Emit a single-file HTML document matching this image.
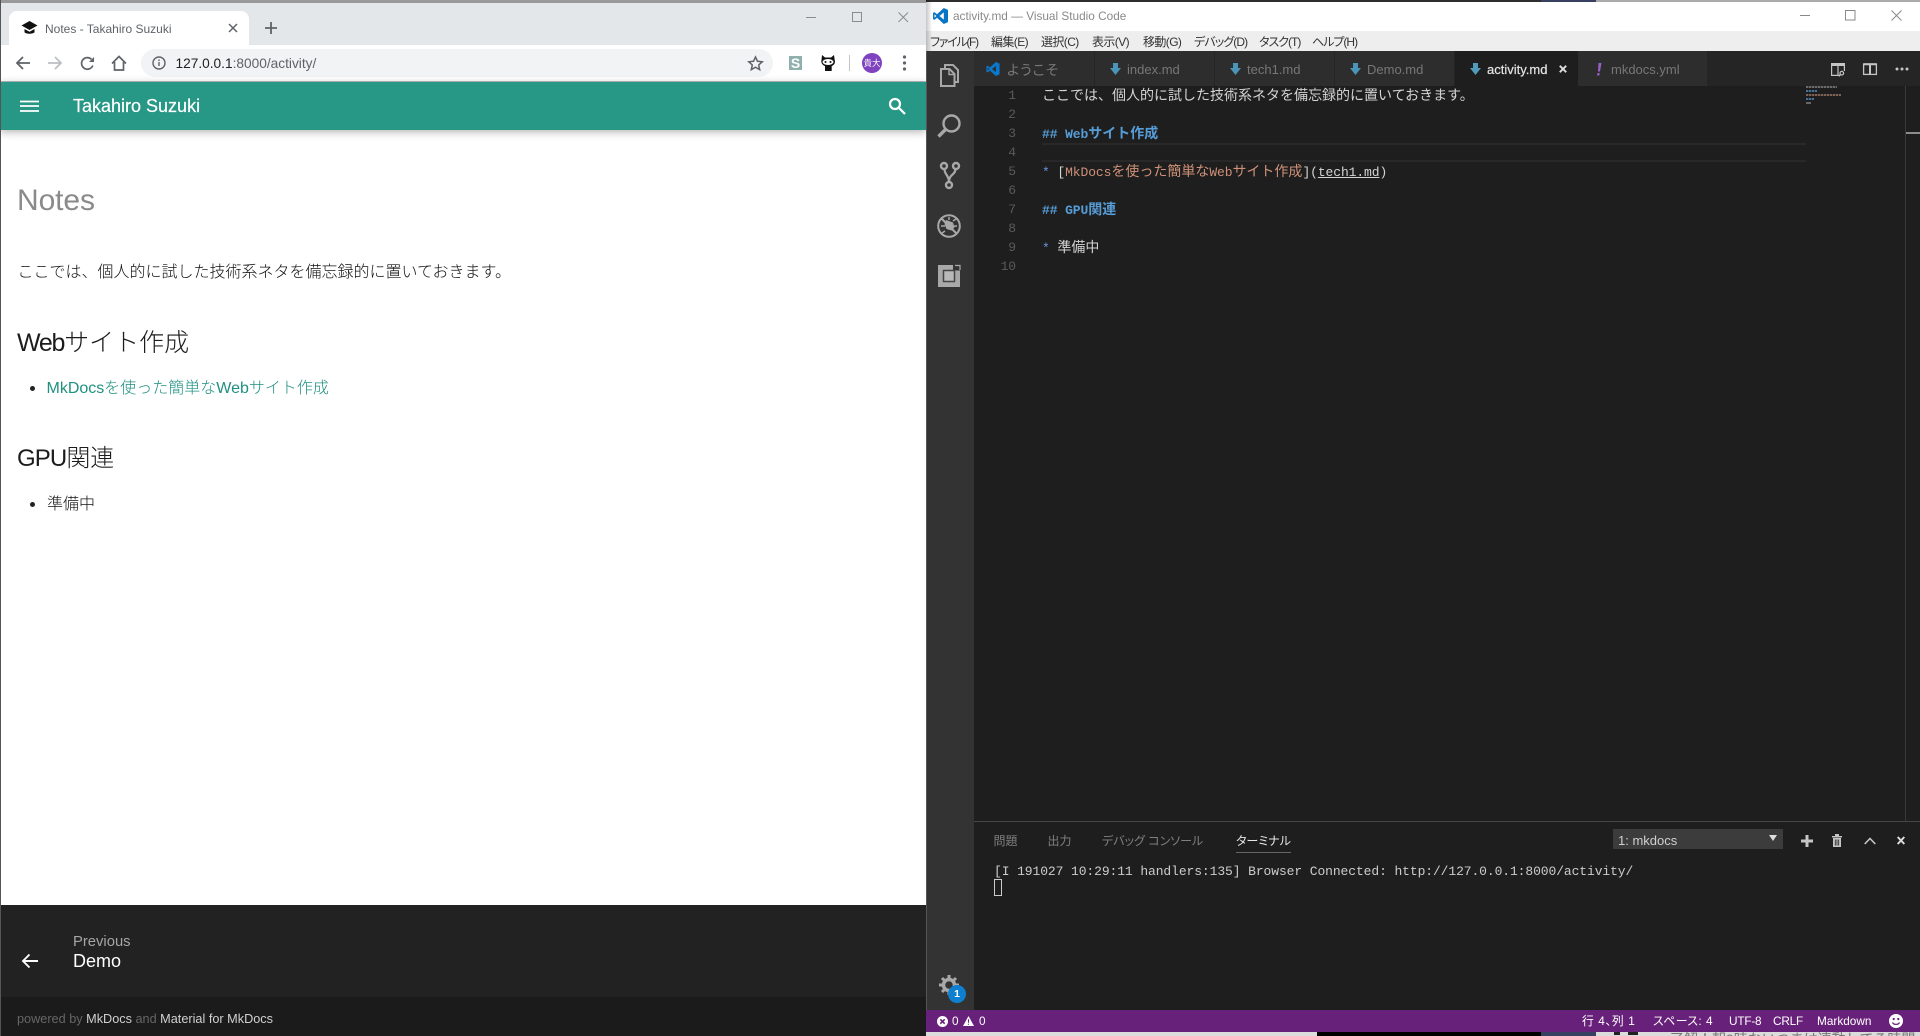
<!DOCTYPE html>
<html lang="ja"><head><meta charset="utf-8"><title>Notes - Takahiro Suzuki</title>
<style>
html,body{margin:0;padding:0;background:#fff}
#r{position:relative;width:1920px;height:1036px;overflow:hidden;background:#fff;font-family:"Liberation Sans","Noto Sans CJK JP",sans-serif}
.b{position:absolute}
.t{position:absolute;white-space:nowrap;line-height:20px;height:20px}
.m{position:absolute;white-space:nowrap;font-family:"Liberation Mono","Noto Sans CJK JP",monospace;font-size:13px;letter-spacing:-.1px;line-height:19px;height:19px;color:#d4d4d4;left:1042px}
.j{font-family:"Noto Sans CJK JP",sans-serif;font-size:14px;letter-spacing:0}
.n{position:absolute;left:990px;width:26px;text-align:right;font-family:"Liberation Mono",monospace;font-size:13px;letter-spacing:-.1px;line-height:19px;color:#5a5a5a}
.h{color:#569cd6;font-weight:bold}
.menu{font-size:12px;color:#333;font-feature-settings:"palt";top:32px}
.tab{font-size:13px;color:#777;top:60px}
.pt{font-size:12px;color:#808080;top:831px;font-feature-settings:"palt"}
.st{font-size:11.800px;color:#fff;top:1011px;font-feature-settings:"palt"}
svg{position:absolute;overflow:visible}
a{text-decoration:none;color:inherit}
</style></head><body><div id="r">

<!-- Browser -->
<div class="b" style="left:0;top:0;width:926px;height:3px;background:#999"></div>
<div class="b" style="left:0;top:3px;width:926px;height:42px;background:#e4e7ea"></div>
<div class="b" style="left:9px;top:11px;width:240px;height:34px;background:#fff;border-radius:8px 8px 0 0"></div>
<div class="b" style="left:0;top:45px;width:926px;height:36px;background:#fff"></div>
<div class="b" style="left:141px;top:49px;width:632px;height:28px;background:#f1f3f4;border-radius:14px"></div>
<div class="b" style="left:0;top:81px;width:926px;height:1px;background:#b8bcbf"></div>
<div class="b" style="left:0;top:82px;width:926px;height:48px;background:#279786;box-shadow:0 2px 8px rgba(0,0,0,.3)"></div>
<div class="b" style="left:0;top:0;width:1px;height:905px;background:#555"></div>

<svg style="left:21px;top:20px" width="17" height="16" viewBox="0 0 17 16"><path d="M8.500 1L0.500 5.500l8 4.500 8-4.500z" fill="#111"/><path d="M3.500 9v3.200c1.500 2 8.500 2 10 0V9l-5 2.800z" fill="#111"/></svg>
<div class="t" style="left:45px;top:19px;font-size:12px;color:#5f6368">Notes - Takahiro Suzuki</div>
<svg style="left:228px;top:23px" width="10" height="10" viewBox="0 0 10 10"><path d="M1 1l8 8M9 1l-8 8" stroke="#5f6368" stroke-width="1.500"/></svg>
<svg style="left:265px;top:22px" width="12" height="12" viewBox="0 0 12 12"><path d="M6 0v12M0 6h12" stroke="#5f6368" stroke-width="1.800"/></svg>
<svg style="left:806px;top:12px" width="102" height="11" viewBox="0 0 102 11" fill="none" stroke="#8a8d90"><path d="M0 5.500h10"/><rect x="46.500" y=".5" width="9" height="9"/><path d="M92.500.5l9.500 9.500M102 .5l-9.500 9.500"/></svg>

<svg style="left:15px;top:55px" width="16" height="16" viewBox="0 0 16 16" fill="none" stroke="#5f6368" stroke-width="1.800"><path d="M15 8H2M8 2L2 8l6 6"/></svg>
<svg style="left:47px;top:55px" width="16" height="16" viewBox="0 0 16 16" fill="none" stroke="#bcbfc2" stroke-width="1.800"><path d="M1 8h13M8 2l6 6-6 6"/></svg>
<svg style="left:80px;top:56px" width="15" height="15" viewBox="0 0 15 15" fill="none" stroke="#5f6368" stroke-width="1.700"><path d="M12.800 9.500A5.800 5.800 0 1 1 11.500 3.300"/><path d="M14 1v5H9" fill="#5f6368" stroke="none"/></svg>
<svg style="left:111px;top:55px" width="16" height="16" viewBox="0 0 16 16" fill="none" stroke="#5f6368" stroke-width="1.700"><path d="M1 8.500L8 1.500l7 7M3.500 7v8h9V7"/></svg>
<svg style="left:152px;top:56px" width="14" height="14" viewBox="0 0 14 14" fill="none" stroke="#5f6368" stroke-width="1.400"><circle cx="7" cy="7" r="6"/><path d="M7 6v4M7 3.500v1.500"/></svg>
<div class="t" style="left:175.500px;top:54px;font-size:13.700px;color:#5f6368"><span style="color:#202124">127.0.0.1</span>:8000/activity/</div>
<svg style="left:748px;top:56px" width="15" height="14" viewBox="0 0 15 14" fill="none" stroke="#5f6368" stroke-width="1.500"><path d="M7.500 1l2 4.300 4.700.500-3.500 3.200 1 4.600-4.200-2.400-4.200 2.400 1-4.600L.8 5.800l4.700-.5z"/></svg>
<div class="b" style="left:789px;top:56px;width:13px;height:14px;background:#8fb0ad"></div>
<div class="t" style="left:789px;top:53px;width:13px;text-align:center;font-size:14px;font-weight:bold;color:#fff">S</div>
<svg style="left:820px;top:54px" width="16" height="18" viewBox="0 0 16 18"><path d="M2 1l3 2.500h6L14 1l.7 5c1 3-1 5.500-3 6v5H5v-5C3 11.500 .6 9 1.500 6z" fill="#111"/><ellipse cx="8" cy="8" rx="5.500" ry="3" fill="#fff"/><circle cx="5.500" cy="8" r="1" fill="#111"/><circle cx="10.500" cy="8" r="1" fill="#111"/></svg>
<div class="b" style="left:849px;top:55px;width:1px;height:16px;background:#c4c6c8"></div>
<div class="b" style="left:862px;top:53px;width:20px;height:20px;border-radius:50%;background:#8043c0"></div>
<div class="t" style="left:862px;top:53px;width:20px;text-align:center;font-size:8.500px;color:#fff">貴大</div>
<svg style="left:902px;top:55px" width="5" height="16" viewBox="0 0 5 16" fill="#5f6368"><circle cx="2.500" cy="2" r="1.600"/><circle cx="2.500" cy="8" r="1.600"/><circle cx="2.500" cy="14" r="1.600"/></svg>

<svg style="left:19.500px;top:100px" width="19" height="12" viewBox="0 0 19 12" stroke="#fff" stroke-width="1.700"><path d="M0 1.500h19M0 6h19M0 11h19"/></svg>
<div class="t" style="left:73px;top:95.500px;font-size:18px;color:#fff;-webkit-text-stroke:.2px #fff">Takahiro Suzuki</div>
<svg style="left:888px;top:97px" width="18" height="18" viewBox="0 0 18 18" fill="none" stroke="#fff" stroke-width="2.200"><circle cx="7" cy="7" r="5"/><path d="M10.500 10.500l6.500 6.500"/></svg>

<div class="t" style="left:17px;top:190px;font-size:30px;line-height:22px;height:22px;color:#8a8a8a;letter-spacing:-.1px">Notes</div>
<div class="t" style="left:17.500px;top:263px;font-size:16px;font-weight:300;color:#111">ここでは、個人的に試した技術系ネタを備忘録的に置いておきます。</div>
<div class="t" style="left:17px;top:333px;font-size:25px;font-weight:300;color:#1c1c1c"><span style="letter-spacing:-1.300px">Web</span>サイト作成</div>
<div class="b" style="left:29.500px;top:385.500px;width:5px;height:5px;border-radius:50%;background:#222"></div>
<div class="t" style="left:46.500px;top:379px;font-size:16px;font-weight:300;color:#1f9080"><a>MkDocsを使った簡単なWebサイト作成</a></div>
<div class="t" style="left:17px;top:449px;font-size:24px;font-weight:300;color:#1c1c1c"><span style="letter-spacing:-.9px">GPU</span>関連</div>
<div class="b" style="left:29.500px;top:501.500px;width:5px;height:5px;border-radius:50%;background:#222"></div>
<div class="t" style="left:47px;top:495px;font-size:16px;font-weight:300;color:#111">準備中</div>

<div class="b" style="left:1px;top:905px;width:925px;height:92px;background:#222"></div>
<div class="b" style="left:1px;top:997px;width:925px;height:39px;background:#1b1b1b"></div>
<div class="b" style="left:0;top:905px;width:1px;height:131px;background:#555"></div>
<svg style="left:20.500px;top:953px" width="17" height="16" viewBox="0 0 17 16" fill="none" stroke="#fff" stroke-width="1.900"><path d="M17 8H2M8.500 1.500L2 8l6.500 6.500"/></svg>
<div class="t" style="left:73px;top:932px;font-size:14.800px;color:#a5a5a5">Previous</div>
<div class="t" style="left:73px;top:951px;font-size:18px;color:#fff">Demo</div>
<div class="t" style="left:17px;top:1009px;font-size:12.700px;color:#666">powered by <span style="color:#d0d0d0">MkDocs</span> and <span style="color:#d0d0d0">Material for MkDocs</span></div>

<!-- VS Code -->
<div class="b" style="left:926px;top:0;width:994px;height:2px;background:#2e2e30"></div>
<div class="b" style="left:1541px;top:0;width:55px;height:2px;background:#374060"></div>
<div class="b" style="left:1596px;top:0;width:324px;height:2px;background:#aaa"></div>
<div class="b" style="left:926px;top:2px;width:994px;height:29px;background:#fff"></div>
<div class="b" style="left:926px;top:31px;width:994px;height:20px;background:#eee"></div>
<div class="b" style="left:926px;top:0;width:6px;height:51px;background:linear-gradient(90deg,rgba(0,0,0,.22),rgba(0,0,0,0))"></div>
<svg style="left:933px;top:8px" width="15" height="16" viewBox="0 0 15 16"><path d="M10.800 0L15 1.900v12.200L10.800 16 4 9.800 1.500 11.900 0 11V5l1.500-.9L4 6.200zM10.800 4.400L6.500 8l4.300 3.600zM1.500 6.200v3.600L3.300 8z" fill="#0a74c4"/></svg>
<div class="t" style="left:953px;top:6px;font-size:11.800px;color:#8a8a8a">activity.md — Visual Studio Code</div>
<svg style="left:1800px;top:10px" width="102" height="11" viewBox="0 0 102 11" fill="none" stroke="#8a8a8a"><path d="M0 5.500h10"/><rect x="45.500" y=".5" width="9.500" height="9.500"/><path d="M91.500.5l10 10M101.500 .5l-10 10"/></svg>
<div class="t menu" style="left:930px;letter-spacing:-1.300px">ファイル(F)</div>
<div class="t menu" style="left:991px;letter-spacing:-.6px">編集(E)</div>
<div class="t menu" style="left:1041px;letter-spacing:-.6px">選択(C)</div>
<div class="t menu" style="left:1092px;letter-spacing:-.6px">表示(V)</div>
<div class="t menu" style="left:1143px;letter-spacing:-.6px">移動(G)</div>
<div class="t menu" style="left:1194px;letter-spacing:-.9px">デバッグ(D)</div>
<div class="t menu" style="left:1259px;letter-spacing:-1px">タスク(T)</div>
<div class="t menu" style="left:1312px;letter-spacing:-1px">ヘルプ(H)</div>

<div class="b" style="left:926px;top:51px;width:1px;height:981px;background:#555"></div>
<div class="b" style="left:927px;top:51px;width:47px;height:959px;background:#333"></div>
<div class="b" style="left:974px;top:51px;width:946px;height:35px;background:#252526"></div>
<div class="b" style="left:974px;top:86px;width:946px;height:924px;background:#1e1e1e"></div>

<div class="b" style="left:974px;top:51px;width:120px;height:35px;background:#2d2d2d"></div>
<div class="b" style="left:1095px;top:51px;width:119px;height:35px;background:#2d2d2d"></div>
<div class="b" style="left:1215px;top:51px;width:119px;height:35px;background:#2d2d2d"></div>
<div class="b" style="left:1335px;top:51px;width:119px;height:35px;background:#2d2d2d"></div>
<div class="b" style="left:1455px;top:51px;width:123px;height:35px;background:#1e1e1e"></div>
<div class="b" style="left:1578px;top:51px;width:129px;height:35px;background:#2d2d2d"></div>

<svg style="left:986px;top:62px" width="14" height="14" viewBox="0 0 15 16"><path d="M10.800 0L15 1.900v12.200L10.800 16 4 9.800 1.500 11.900 0 11V5l1.500-.9L4 6.200zM10.800 4.400L6.500 8l4.300 3.600zM1.500 6.200v3.600L3.300 8z" fill="#0a78cc"/></svg>
<div class="t tab" style="left:1007px;font-size:14px;font-feature-settings:'palt';letter-spacing:.9px">ようこそ</div>
<svg style="left:1110px;top:63px" width="11" height="12" viewBox="0 0 11 12"><path d="M3 0h5v5h3l-5.500 7L0 5h3z" fill="#4c93b8"/></svg>
<div class="t tab" style="left:1127px">index.md</div>
<svg style="left:1230px;top:63px" width="11" height="12" viewBox="0 0 11 12"><path d="M3 0h5v5h3l-5.500 7L0 5h3z" fill="#4c93b8"/></svg>
<div class="t tab" style="left:1247px">tech1.md</div>
<svg style="left:1350px;top:63px" width="11" height="12" viewBox="0 0 11 12"><path d="M3 0h5v5h3l-5.500 7L0 5h3z" fill="#4c93b8"/></svg>
<div class="t tab" style="left:1367px">Demo.md</div>
<svg style="left:1470px;top:63px" width="11" height="12" viewBox="0 0 11 12"><path d="M3 0h5v5h3l-5.500 7L0 5h3z" fill="#519aba"/></svg>
<div class="t tab" style="left:1487px;color:#e4e4e4;-webkit-text-stroke:.2px #e4e4e4">activity.md</div>
<svg style="left:1559px;top:65px" width="8" height="8" viewBox="0 0 8 8"><path d="M.8.8l6.400 6.400M7.200.8L.8 7.200" stroke="#ddd" stroke-width="1.900"/></svg>
<svg style="left:1596px;top:63px" width="6" height="13" viewBox="0 0 6 13"><path d="M2.500 0h3L4 8.500H2zM1.500 10h2.200l-.4 2.500H1z" fill="#9a5fc4"/></svg>
<div class="t tab" style="left:1611px">mkdocs.yml</div>

<svg style="left:1831px;top:63px" width="14" height="14" viewBox="0 0 14 14" fill="none" stroke="#c5c5c5" stroke-width="1.200"><path d="M.6 2h12.800v6M.6 2v10.400H9M7 2v10"/><rect x=".6" y=".6" width="12.800" height="1.800" fill="#c5c5c5"/><circle cx="10.800" cy="10.200" r="1.800"/><path d="M9.400 11.600l-1.400 1.800"/></svg>
<svg style="left:1863px;top:63px" width="14" height="12" viewBox="0 0 14 12" fill="none" stroke="#c5c5c5" stroke-width="1.300"><rect x=".6" y="1" width="12.800" height="10.400"/><path d="M7 1v10.400M.6 1.200h12.800" stroke-width="2"/></svg>
<svg style="left:1895px;top:67px" width="14" height="4" viewBox="0 0 14 4" fill="#c5c5c5"><circle cx="2" cy="2" r="1.500"/><circle cx="7" cy="2" r="1.500"/><circle cx="12" cy="2" r="1.500"/></svg>

<!-- Activity icons -->
<svg style="left:927px;top:51px" width="47" height="250" viewBox="927 51 47 250" fill="none" stroke="#a8a8a8">
<path d="M945 68v-3h8l5 5v12h-3" stroke-width="2"/><path d="M941 69h8.500l5 5v12h-13.500z" stroke-width="2"/><path d="M949 69.500v5h5" stroke-width="1.400"/>
<circle cx="951.500" cy="123.500" r="8" stroke-width="2.400"/><path d="M945.500 129.500l-7 7" stroke-width="3.400"/>
<circle cx="944" cy="166" r="3" stroke-width="2.400"/><circle cx="956" cy="166" r="3" stroke-width="2.400"/><circle cx="949" cy="185" r="3" stroke-width="2.400"/><path d="M944.500 169c0 6 4.500 6 4.500 13M955.500 169c0 6-6.500 5-6.500 13" stroke-width="2.200"/>
<circle cx="949" cy="226" r="10.800" stroke-width="2"/><path d="M941.500 218.500l15 15" stroke-width="2"/><path d="M946 220l7 2.500 1.500 5-3 3-5-1.500-2-5z" fill="#a8a8a8" stroke="none"/><path d="M941 226h4M949 217v3M957 226h-3M942 233l3-2M956 219l-3 2" stroke-width="1.500"/>
<rect x="938" y="265" width="22" height="22" fill="#a8a8a8" stroke="none"/><path d="M953 270.500v-5.500h7v5.500z" fill="#333" stroke="none"/><path d="M955 265.500h5v4.500" stroke="#a8a8a8" stroke-width="1.200"/><rect x="943.500" y="270.500" width="11" height="11" fill="#b9b9b9" stroke="#444" stroke-width="1.500"/>
</svg>

<!-- Editor -->
<div class="n" style="top:85.500px">1</div><div class="n" style="top:104.500px">2</div><div class="n" style="top:123.500px">3</div><div class="n" style="top:142.500px">4</div><div class="n" style="top:161.500px">5</div><div class="n" style="top:180.500px">6</div><div class="n" style="top:199.500px">7</div><div class="n" style="top:218.500px">8</div><div class="n" style="top:237.500px">9</div><div class="n" style="top:256.500px">10</div>
<div class="b" style="left:1042px;top:143px;width:764px;height:19px;border-top:2px solid #282828;border-bottom:2px solid #282828;box-sizing:border-box"></div>
<div class="m" style="top:85.500px"><span class="j">ここでは、個人的に試した技術系ネタを備忘録的に置いておきます。</span></div>
<div class="m h" style="top:123.500px">## Web<span class="j">サイト作成</span></div>
<div class="m" style="top:161.500px"><span style="color:#6796e6">*</span> [<span style="color:#ce9178">MkDocs<span class="j">を使った簡単な</span>Web<span class="j">サイト作成</span></span>](<span style="text-decoration:underline">tech1.md</span>)</div>
<div class="m h" style="top:199.500px">## GPU<span class="j">関連</span></div>
<div class="m" style="top:237.500px"><span style="color:#6796e6">*</span> <span class="j">準備中</span></div>

<!-- Minimap + scrollbar -->
<div class="b" style="left:1806px;top:86px;width:31px;height:2px;background:repeating-linear-gradient(90deg,#6a6a6a 0 2px,#3a3a3a 2px 3px)"></div>
<div class="b" style="left:1806px;top:90px;width:11px;height:2px;background:repeating-linear-gradient(90deg,#44709a 0 2px,#2a3a4a 2px 3px)"></div>
<div class="b" style="left:1806px;top:94px;width:35px;height:2px;background:repeating-linear-gradient(90deg,#7d6152 0 2px,#3f3530 2px 3px)"></div>
<div class="b" style="left:1806px;top:98px;width:8px;height:2px;background:repeating-linear-gradient(90deg,#44709a 0 2px,#2a3a4a 2px 3px)"></div>
<div class="b" style="left:1806px;top:102px;width:5px;height:2px;background:#666"></div>
<div class="b" style="left:1905px;top:86px;width:1px;height:735px;background:#3a3a3a"></div>
<div class="b" style="left:1906px;top:132px;width:14px;height:2px;background:#8c8c8c"></div>

<!-- Panel -->
<div class="b" style="left:974px;top:821px;width:946px;height:1px;background:#454545"></div>
<div class="t pt" style="left:993.500px">問題</div>
<div class="t pt" style="left:1047.500px">出力</div>
<div class="t pt" style="left:1102px">デバッグ コンソール</div>
<div class="t pt" style="left:1236px;color:#e7e7e7">ターミナル</div>
<div class="b" style="left:1236px;top:852px;width:55px;height:1px;background:#666"></div>
<div class="m" style="left:994px;top:862px;color:#ccc">[I 191027 10:29:11 handlers:135] Browser Connected: http://127.0.0.1:8000/activity/</div>
<div class="b" style="left:994px;top:879px;width:6px;height:15px;border:1px solid #ccc"></div>
<div class="b" style="left:1613px;top:829px;width:170px;height:20px;background:#3c3c3c"></div>
<div class="t" style="left:1618px;top:830.500px;font-size:13px;color:#d0d0d0">1: mkdocs</div>
<svg style="left:1769px;top:835px" width="8" height="6" viewBox="0 0 8 6"><path d="M0 0h8L4 6z" fill="#ddd"/></svg>
<svg style="left:1801px;top:835px" width="12" height="12" viewBox="0 0 12 12"><path d="M6 0v12M0 6h12" stroke="#c5c5c5" stroke-width="3"/></svg>
<svg style="left:1832px;top:834px" width="10" height="13" viewBox="0 0 10 13" fill="#c5c5c5"><path d="M0 2h10v1.500H0zM3 0h4v2H3zM1 4h8v9H1z"/><path d="M3.300 5.500v6M5 5.500v6M6.700 5.500v6" stroke="#1e1e1e" stroke-width=".8"/></svg>
<svg style="left:1864px;top:837px" width="12" height="8" viewBox="0 0 12 8" fill="none"><path d="M.7 7L6 1.500 11.300 7" stroke="#c5c5c5" stroke-width="1.600"/></svg>
<svg style="left:1897px;top:836px" width="8" height="9" viewBox="0 0 8 9"><path d="M.7 1l6.600 7M7.300 1L.7 8" stroke="#ddd" stroke-width="2"/></svg>

<!-- Gear -->
<svg style="left:939px;top:975px" width="20" height="20" viewBox="0 0 20 20"><circle cx="10" cy="10" r="5.500" fill="none" stroke="#a8a8a8" stroke-width="3.500"/><path d="M10 0v4M10 16v4M0 10h4M16 10h4M3 3l3 3M14 14l3 3M17 3l-3 3M3 17l3-3" stroke="#a8a8a8" stroke-width="3"/></svg>
<div class="b" style="left:948px;top:985px;width:18px;height:18px;border-radius:50%;background:#0f7fd0"></div>
<div class="t" style="left:948px;top:984px;width:18px;text-align:center;font-size:10.500px;color:#fff;font-weight:bold">1</div>

<!-- Status -->
<div class="b" style="left:926px;top:1010px;width:994px;height:22px;background:#68217a"></div>
<svg style="left:937px;top:1016px" width="11" height="11" viewBox="0 0 11 11"><circle cx="5.500" cy="5.500" r="5.500" fill="#fff"/><path d="M3.300 3.300l4.400 4.400M7.700 3.300L3.300 7.700" stroke="#68217a" stroke-width="1.600"/></svg>
<div class="t st" style="left:952px">0</div>
<svg style="left:963px;top:1016px" width="11" height="10" viewBox="0 0 11 10"><path d="M5.500 0L11 10H0z" fill="#fff"/><path d="M5.500 3.200v3.600M5.500 7.800v1" stroke="#68217a" stroke-width="1.100"/></svg>
<div class="t st" style="left:979px">0</div>
<div class="t st" style="left:1582px;letter-spacing:.6px">行 4、列 1</div>
<div class="t st" style="left:1653px;letter-spacing:.5px">スペース: 4</div>
<div class="t st" style="left:1729px;letter-spacing:-.2px">UTF-8</div>
<div class="t st" style="left:1773px;letter-spacing:-.2px">CRLF</div>
<div class="t st" style="left:1817px">Markdown</div>
<svg style="left:1889px;top:1014px" width="14" height="14" viewBox="0 0 14 14"><circle cx="7" cy="7" r="7" fill="#fff"/><circle cx="4.700" cy="5" r="1.100" fill="#68217a"/><circle cx="9.300" cy="5" r="1.100" fill="#68217a"/><path d="M3.500 8.500c1 2.500 6 2.500 7 0" fill="none" stroke="#68217a" stroke-width="1.200"/></svg>

<!-- Bottom strip -->
<div class="b" style="left:926px;top:1032px;width:391px;height:4px;background:#dcdcdc"></div>
<div class="b" style="left:1317px;top:1032px;width:224px;height:4px;background:#000"></div>
<div class="b" style="left:1541px;top:1032px;width:55px;height:4px;background:#374060"></div>
<div class="b" style="left:1596px;top:1032px;width:324px;height:4px;background:#dcdcdc;overflow:hidden"><div class="t" style="left:74px;top:0;line-height:14px;font-size:14px;color:#777">了解！朝9時ないつまは連動してる時間</div><div class="b" style="left:18px;top:0;width:6px;height:3px;background:#222"></div><div class="b" style="left:32px;top:0;width:10px;height:3px;background:#222"></div></div>

</div></body></html>
